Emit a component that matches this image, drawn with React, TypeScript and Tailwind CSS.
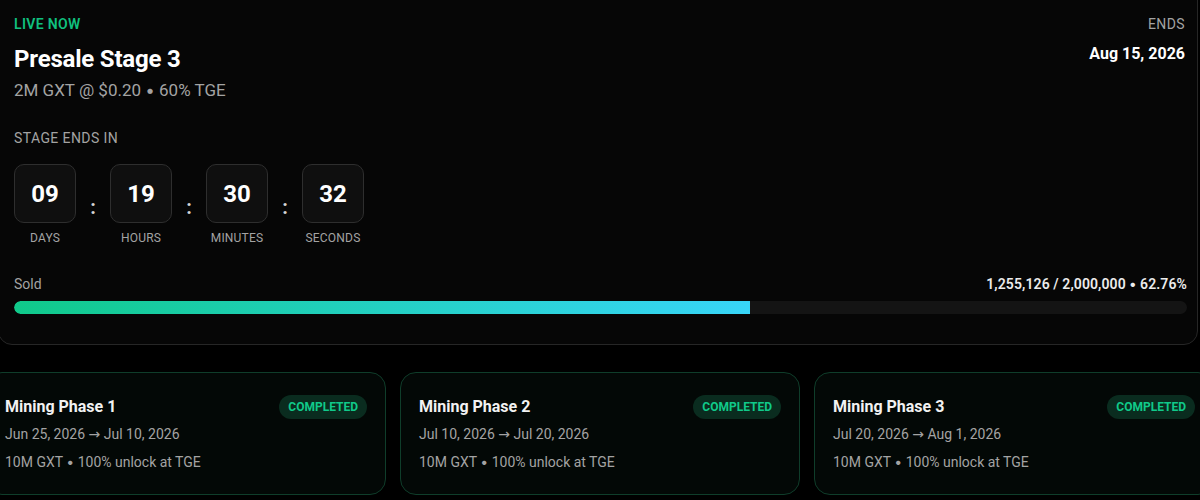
import React from "react";

const phases = [
  { name: "Mining Phase 1", from: "Jun 25, 2026", to: "Jul 10, 2026" },
  { name: "Mining Phase 2", from: "Jul 10, 2026", to: "Jul 20, 2026" },
  { name: "Mining Phase 3", from: "Jul 20, 2026", to: "Aug 1, 2026" },
];

const units = [
  { v: "09", l: "DAYS" },
  { v: "19", l: "HOURS" },
  { v: "30", l: "MINUTES" },
  { v: "32", l: "SECONDS" },
];

const Dot = () => <span style={{ fontFamily: "Inter, sans-serif" }}>•</span>;

export default function App() {
  return (
    <div
      className="w-[1200px] h-[500px] overflow-hidden bg-black text-white"
      style={{ fontFamily: "Roboto, 'Liberation Sans', sans-serif" }}
    >
      {/* Top card */}
      <div className="ml-[-2px] mt-[-20px] w-[1200px] rounded-[14px] border border-[#262626] bg-[#060606] pl-[15px] pr-[10px] pt-[33px] pb-[30px]">
        <div className="flex justify-between">
          <div>
            <div className="text-[14px] leading-[20px] font-semibold tracking-[0.35px] text-[#10c07f]">LIVE NOW</div>
            <div className="mt-[11px] text-[24px] leading-[28px] font-bold tracking-[-0.2px]">Presale Stage 3</div>
            <div className="mt-[5px] text-[17px] leading-[24px] text-[#a3a3a3]">
              2M GXT @ $0.20 <Dot /> 60% TGE
            </div>
          </div>
          <div className="flex flex-col items-end pr-[2px]">
            <div className="text-[14px] leading-[20px] tracking-[0.4px] text-[#a3a3a3]">ENDS</div>
            <div className="mt-[10px] text-[16px] leading-[20px] font-bold">Aug 15, 2026</div>
          </div>
        </div>
        <div className="mt-[26px] text-[14px] leading-[20px] tracking-[0.4px] text-[#a3a3a3]">STAGE ENDS IN</div>
        <div className="mt-[16px] flex items-start">
          {units.map((u, i) => (
            <React.Fragment key={u.l}>
              <div className="flex w-[62px] flex-col items-center">
                <div className="flex h-[59px] w-[62px] items-center justify-center rounded-[10px] border border-[#2e2e2e] bg-[#0f0f0f] text-[24px] font-bold">
                  {u.v}
                </div>
                <div className="mt-[7px] text-[12px] leading-[16px] tracking-[0.2px] text-[#a3a3a3] whitespace-nowrap">{u.l}</div>
              </div>
              {i < units.length - 1 && (
                <div className="flex h-[59px] w-[34px] items-center justify-center pt-[27px] text-[20px] font-bold text-[#d4d4d4]">
                  :
                </div>
              )}
            </React.Fragment>
          ))}
        </div>
        <div className="mt-[28px] flex items-center justify-between">
          <div className="text-[14px] leading-[20px] text-[#a3a3a3]">Sold</div>
          <div className="text-[14px] leading-[20px] font-semibold tracking-[0.1px] text-[#ececec]">
            1,255,126 / 2,000,000 <Dot /> 62.76%
          </div>
        </div>
        <div className="mt-[7px] h-[13px] w-full overflow-hidden rounded-full bg-[#141414]">
          <div
            className="h-full rounded-l-full bg-gradient-to-r from-[#10c98a] to-[#38d5f8]"
            style={{ width: "62.76%" }}
          />
        </div>
      </div>

      {/* Mining cards */}
      <div className="ml-[-14px] mt-[27px] flex gap-[14px]">
        {phases.map((p) => (
          <div
            key={p.name}
            className="w-[400px] shrink-0 rounded-[16px] border border-[#0f3d2a] bg-[#030806] pl-[18px] pr-[18px] pt-[22px] pb-[22px]"
          >
            <div className="flex items-center justify-between">
              <div className="text-[16px] leading-[24px] font-bold text-[#f2f2f2]">{p.name}</div>
              <div className="flex h-[24px] items-center rounded-full bg-[#0a2c1f] px-[9px] text-[12px] font-bold text-[#10c98a]">
                COMPLETED
              </div>
            </div>
            <div className="mt-[5px] text-[14px] leading-[20px] text-[#a3a3a3]">
              {p.from} <span style={{ fontFamily: "'DejaVu Sans', sans-serif" }}>→</span> {p.to}
            </div>
            <div className="mt-[8px] text-[14px] leading-[20px] text-[#a3a3a3]">
              10M GXT <Dot /> 100% unlock at TGE
            </div>
          </div>
        ))}
      </div>
    </div>
  );
}
